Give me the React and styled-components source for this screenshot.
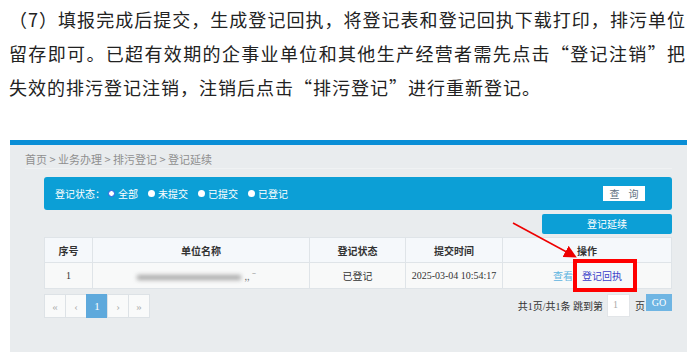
import React from 'react';
import styled, { createGlobalStyle } from 'styled-components';

const GlobalStyle = createGlobalStyle`
  html, body {
    margin: 0;
    padding: 0;
    background: #fff;
  }
  body {
    font-family: "Noto Sans CJK SC", "Noto Sans", sans-serif;
  }
`;

const Page = styled.div`
  width: 695px;
  height: 363px;
  overflow: hidden;
`;

const Para = styled.p`
  margin: 2px 0 0 9px;
  width: 677px;
  font-size: 18px;
  line-height: 34px;
  letter-spacing: 1px;
  text-align: justify;
  color: #222;
`;

const Shot = styled.div`
  position: relative;
  box-sizing: border-box;
  margin: 36px 0 0 10px;
  width: 677px;
  height: 212px;
  background: #e9ecee;
  border-top: 5px solid #0a8ed6;
  padding: 0 15px;
  font-size: 10px;
  color: #333;
`;

const Crumbs = styled.div`
  padding-top: 6px;
  line-height: 17px;
  font-size: 11px;
  color: #8f8f8f;
  border-bottom: 1px solid #f0f2f3;
`;

const Content = styled.div`
  margin-left: 19px;
`;

const FilterBar = styled.div`
  margin-top: 8px;
  height: 33px;
  border-radius: 3px;
  background: #0c9fd6;
  display: flex;
  align-items: center;
  padding: 0 27px 0 11px;
  color: #fff;
`;

const Label = styled.span`
  margin-right: 3px;
`;

const Radio = styled.span`
  display: inline-flex;
  align-items: center;
  gap: 3px;
  margin-right: 10px;
  &::before {
    content: '';
    box-sizing: border-box;
    width: 7px;
    height: 7px;
    border-radius: 50%;
    background: #fff;
    border: ${(p) => (p.$on ? '1.5px solid #2d5be0' : '0 none')};
  }
`;

const QueryButton = styled.span`
  margin-left: auto;
  width: 42px;
  height: 15px;
  background: #fff;
  color: #60707f;
  display: flex;
  align-items: center;
  justify-content: center;
  gap: 9px;
`;

const ActionRow = styled.div`
  display: flex;
  justify-content: flex-end;
  margin-top: 4px;
`;

const BlueButton = styled.span`
  width: 130px;
  height: 20px;
  line-height: 20px;
  border-radius: 2px;
  background: #0c9fd6;
  color: #fff;
  text-align: center;
`;

const Table = styled.table`
  margin-top: 3px;
  width: 628px;
  border-collapse: collapse;
  table-layout: fixed;
`;

const Th = styled.th`
  height: 24px;
  padding: 0;
  border: 1px solid #dfe4e8;
  background: #f5f8fb;
  font-weight: 700;
  color: #333;
  width: ${(p) => (p.$w ? `${p.$w}px` : 'auto')};
`;

const Td = styled.td`
  height: 25px;
  padding: 0 0 0 ${(p) => p.$pad || 0}px;
  border: 1px solid #dfe4e8;
  background: #f8f9f9;
  text-align: ${(p) => (p.$pad ? 'left' : 'center')};
  white-space: nowrap;
  font-family: ${(p) => (p.$serif ? '"Liberation Serif", "Noto Sans CJK SC", serif' : 'inherit')};
`;

const Redacted = styled.span`
  display: inline-block;
  width: 104px;
  height: 5px;
  margin-left: -6px;
  background: #a9a9a9;
  filter: blur(2px);
  vertical-align: middle;
`;

const Tail = styled.span`
  margin-left: 3px;
  color: #777;
  font-size: 9px;
`;

const Link = styled.span`
  color: ${(p) => (p.$dark ? '#3b3fc9' : '#5db4e0')};
  margin-left: ${(p) => (p.$dark ? '9px' : '0')};
`;

const Footer = styled.div`
  margin-top: 5px;
  display: flex;
  justify-content: space-between;
  align-items: flex-start;
`;

const Pager = styled.div`
  display: flex;
`;

const PageBtn = styled.span`
  box-sizing: border-box;
  width: 22px;
  height: 24px;
  margin-left: -1px;
  &:first-child { margin-left: 0; }
  border: 1px solid ${(p) => (p.$on ? '#5ea9dc' : '#dde2e6')};
  background: ${(p) => (p.$on ? '#5ea9dc' : '#f9fafa')};
  color: ${(p) => (p.$on ? '#fff' : '#b0b0b0')};
  font-family: "Liberation Serif", serif;
  font-size: 11px;
  display: flex;
  align-items: center;
  justify-content: center;
`;

const Jump = styled.div`
  display: flex;
  align-items: flex-start;
  color: #333;
`;

const JumpText = styled.span`
  margin-top: 4px;
  font-family: "Liberation Serif", "Noto Sans CJK SC", serif;
`;

const PageInput = styled.span`
  box-sizing: border-box;
  width: 23px;
  height: 23px;
  margin: 0 5px 0 4px;
  background: #fff;
  border: 1px solid #e2e5e8;
  color: #aaa;
  font-family: "Liberation Serif", serif;
  padding: 4px 0 0 5px;
`;

const GoButton = styled.span`
  margin-left: 1px;
  width: 26px;
  height: 17px;
  line-height: 17px;
  background: #6fb5e3;
  color: #fff;
  text-align: center;
  font-family: "Liberation Serif", serif;
`;

const Arrow = styled.svg`
  position: absolute;
  left: 500px;
  top: 73px;
  overflow: visible;
`;

const RedBox = styled.div`
  position: absolute;
  left: 563px;
  top: 114px;
  width: 64px;
  height: 33px;
  box-sizing: border-box;
  border: 4px solid #f00;
`;

export default function App() {
  return (
    <Page>
      <GlobalStyle />
      <Para>
        （7）填报完成后提交，生成登记回执，将登记表和登记回执下载打印，排污单位留存即可。已超有效期的企事业单位和其他生产经营者需先点击“登记注销”把失效的排污登记注销，注销后点击“排污登记”进行重新登记。
      </Para>
      <Shot>
        <Crumbs>首页 &gt; 业务办理 &gt; 排污登记 &gt; 登记延续</Crumbs>
        <Content>
          <FilterBar>
            <Label>登记状态：</Label>
            <Radio $on>全部</Radio>
            <Radio>未提交</Radio>
            <Radio>已提交</Radio>
            <Radio>已登记</Radio>
            <QueryButton>
              <span>查</span>
              <span>询</span>
            </QueryButton>
          </FilterBar>
          <ActionRow>
            <BlueButton>登记延续</BlueButton>
          </ActionRow>
          <Table>
            <thead>
              <tr>
                <Th $w={47}>序号</Th>
                <Th $w={216}>单位名称</Th>
                <Th $w={95}>登记状态</Th>
                <Th $w={96}>提交时间</Th>
                <Th>操作</Th>
              </tr>
            </thead>
            <tbody>
              <tr>
                <Td $serif>1</Td>
                <Td>
                  <Redacted />
                  <Tail>,,ˉ</Tail>
                </Td>
                <Td>已登记</Td>
                <Td $serif>2025-03-04 10:54:17</Td>
                <Td $pad={50}>
                  <Link>查看</Link>
                  <Link $dark>登记回执</Link>
                </Td>
              </tr>
            </tbody>
          </Table>
          <Footer>
            <Pager>
              <PageBtn>«</PageBtn>
              <PageBtn>‹</PageBtn>
              <PageBtn $on>1</PageBtn>
              <PageBtn>›</PageBtn>
              <PageBtn>»</PageBtn>
            </Pager>
            <Jump>
              <JumpText>共1页/共1条 跳到第</JumpText>
              <PageInput>1</PageInput>
              <JumpText>页</JumpText>
              <GoButton>GO</GoButton>
            </Jump>
          </Footer>
        </Content>
        <Arrow width="80" height="40">
          <defs>
            <marker id="head" markerWidth="8" markerHeight="8" refX="6" refY="4" orient="auto">
              <path d="M0,0 L8,4 L0,8 Z" fill="#e00" />
            </marker>
          </defs>
          <line x1="3" y1="5" x2="64" y2="38" stroke="#e00" strokeWidth="1.6" markerEnd="url(#head)" />
        </Arrow>
        <RedBox />
      </Shot>
    </Page>
  );
}
